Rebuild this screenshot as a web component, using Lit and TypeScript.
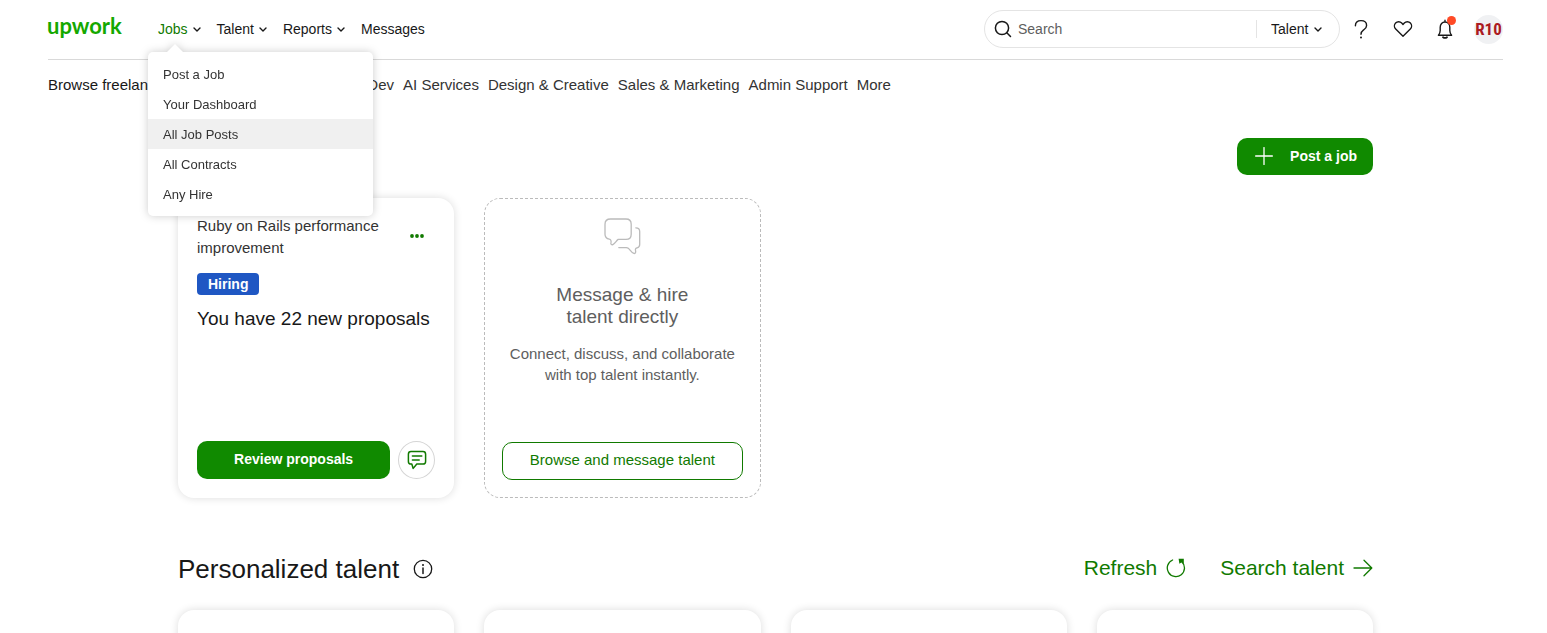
import { LitElement, html, css, svg } from "lit";
import { customElement } from "lit/decorators.js";
import { classMap } from "lit/directives/class-map.js";

const chevron = html`<svg class="chevron" viewBox="0 0 8 5" aria-hidden="true">
  <path d="M1 1 4 4 7 1" fill="none" stroke="currentColor" stroke-width="1.4" stroke-linecap="round" stroke-linejoin="round" />
</svg>`;

const icon = (w: number, h: number, body: unknown) => html`<svg
  width=${w} height=${h} viewBox="0 0 ${w} ${h}" fill="none" stroke="currentColor"
  stroke-width="1.5" stroke-linecap="round" stroke-linejoin="round" aria-hidden="true">${body}</svg>`;

const searchIcon = icon(18, 18, svg`<circle cx="8" cy="8" r="6.6"/><path d="m12.8 12.8 3.7 3.7"/>`);
const helpIcon = icon(14, 20, svg`<path stroke-width="1.4" d="M1.4 6.8C1.4 3.6 3.6 1.6 7 1.6s5.6 2 5.6 4.8c0 2.4-1.4 3.3-3 4.5C7.900 12.200 7 13.200 7 15.200"/><circle cx="7" cy="18.400" r="1" fill="currentColor" stroke="none"/>`);
const heartIcon = icon(20, 18, svg`<path stroke-width="1.4" d="M10 16.2 2.7 9.1A4.4 4.4 0 0 1 2.6 3 4.2 4.2 0 0 1 8.7 3L10 4.4 11.3 3a4.2 4.2 0 0 1 6.1 0 4.4 4.4 0 0 1-.1 6.1Z"/>`);
const bellIcon = icon(16, 20, svg`<path stroke-width="1.4" d="M1.4 16.2c1.4-1.4 1.8-2.6 1.8-4.6V8.2c0-3 2-5.2 4.8-5.2s4.8 2.2 4.8 5.2v3.4c0 2 .4 3.2 1.8 4.600ZM8 1.200V3"/><path stroke-width="1.800" d="M6 18.200c1.200.9 2.800.9 4 0"/>`);
const plusIcon = icon(18, 18, svg`<path stroke-width="1.3" d="M9 .6v16.8M.6 9h16.8"/>`);
const dotsIcon = html`<svg width="14" height="4" viewBox="0 0 14 4" fill="currentColor" aria-hidden="true">
  <circle cx="2" cy="2" r="1.9"/><circle cx="7" cy="2" r="1.9"/><circle cx="12" cy="2" r="1.9"/></svg>`;
const noteIcon = icon(20, 20, svg`<path d="M4 1.6h12c1.6 0 2.6 1 2.6 2.6v7.2c0 1.6-1 2.6-2.6 2.6H9.8l-3.6 4.4-1.4-4.4H4c-1.6 0-2.6-1-2.6-2.6V4.2c0-1.6 1-2.6 2.6-2.6ZM5.4 6h9.4M5.4 9.9h6.8"/>`);
const chatIcon = icon(37, 37, svg`<path stroke-width="1.3" d="M6.5 1h15.5c3.4 0 5.2 1.8 5.2 5.2v10c0 3.4-1.8 5.2-5.2 5.2h-7.8c-1.8 1.2-3 4-5.4 5.2-1.8.6-2.2-.8-1.8-2.2.4-1.8-.4-3-1.6-3.2C2.6 20.6 1 18.8 1 16.2v-10C1 2.8 3 1 6.500 1Z"/><path stroke-width="1.3" d="M31.8 9.8c2.6 0 3.9 1.2 3.9 3.6v13.2c0 2-1 2.9-2.6 3.2-1.2.2-2 1-1.6 2.6.5 2 0 3.4-1.6 3-2.6-.8-3.6-3.6-5.6-5.2-.6-.4-1.2-.6-2-.6h-7.5"/>`);
const infoIcon = icon(20, 20, svg`<circle cx="10" cy="10" r="8.7" stroke-width="1.3"/><path stroke-width="1.5" d="M10 9v5.4"/><circle cx="10" cy="6" r="1" fill="currentColor" stroke="none"/>`);
const refreshIcon = icon(20, 20, svg`<path stroke-width="1.3" d="M6.6 2A8.6 8.6 0 1 0 15.8 3.7"/><path d="M12.6.8h5.200V6l-2-1.700-2.400 1.500Z" fill="currentColor" stroke="none"/>`);
const arrowIcon = icon(20, 18, svg`<path stroke-width="1.3" d="M1 9h17.6M11 1.2 18.8 9 11 16.8"/>`);

@customElement("app-header")
class AppHeader extends LitElement {
  static styles = css`
    :host { display: block; font: 14px/20px "Liberation Sans", Arial, sans-serif; color: #181818; }
    button, input, select { font: inherit; color: inherit; background: none; border: 0; padding: 0; margin: 0; }
    a { color: inherit; text-decoration: none; }
    .bar { display: flex; align-items: center; height: 58px; padding-bottom: 1px; border-bottom: 1px solid #d9d9d9; }
    .home { display: flex; }
    .logo { width: 76px; height: 32px; flex: none; overflow: visible; }
    .logo text { font: 700 22px Lato, sans-serif; fill: #14a800; }
    .nav { display: flex; gap: 16px; margin-left: 34px; flex: 1; }
    .item { position: relative; display: flex; }
    .trigger { display: flex; align-items: center; gap: 5px; cursor: pointer; white-space: nowrap; }
    .open { color: #117a00; }
    .open .chevron { color: #181818; }
    .chevron { width: 8px; height: 5px; flex: none; }
    .menu { position: absolute; z-index: 2; top: 33px; left: -10px; width: 225px; box-sizing: border-box;
      padding: 7px 0; background: #fff; border-radius: 5px; filter: drop-shadow(0 0 4px rgba(0, 0, 0, 0.2)); }
    .menu::before { content: ""; position: absolute; top: -8px; left: 19px; width: 16px; height: 8px;
      background: #fff; clip-path: polygon(50% 0, 100% 100%, 0 100%); }
    .entry { display: block; padding: 2px 15px 0; font-size: 13px; line-height: 28px; color: #333; background: #fff; }
    .active { background: #f0f0f0; }
    .search { display: flex; align-items: center; box-sizing: border-box; width: 356px; height: 38px;
      padding: 0 17px 0 9px; border: 1px solid #e4e4e4; border-radius: 19px; }
    .query { flex: 1; min-width: 0; margin-left: 6px; outline: none; }
    .query::placeholder { color: #5e5e5e; opacity: 1; }
    .scope { display: flex; align-items: center; border-left: 1px solid #e4e4e4; padding-left: 14px; }
    .select { appearance: none; width: 43px; height: 18px; line-height: 18px; outline: none; }
    .tools { display: flex; align-items: center; }
    .tool { position: relative; display: flex; justify-content: center; width: 42px; cursor: pointer; }
    .dot { position: absolute; top: -3px; right: 10px; width: 9px; height: 9px; border-radius: 50%; background: #ff4a26; }
    .avatar { display: flex; align-items: center; justify-content: center; width: 29px; height: 29px; margin-left: 8px;
      border-radius: 50%; background: #f0f1f3; color: #ab1b22; cursor: pointer;
      font: bold 17px "Roboto Condensed", Roboto, sans-serif; }
    .skills { display: flex; gap: 9px; padding-top: 15px; font-size: 15px; color: #333; white-space: nowrap; }
    .lead { width: 247px; color: #181818; flex: none; box-sizing: border-box; }
  `;

  render() {
    const entries = ["Post a Job", "Your Dashboard", "All Job Posts", "All Contracts", "Any Hire"];
    const skills = ["Software Dev", "AI Services", "Design & Creative", "Sales & Marketing", "Admin Support", "More"];
    return html`
      <header class="bar">
        <a class="home" href="#" aria-label="Upwork home"><svg class="logo" viewBox="0 0 76 32"><text x="-1" y="21">upwork</text></svg></a>
        <nav class="nav" aria-label="Main">
          <div class="item">
            <button class="trigger open" aria-expanded="true">Jobs ${chevron}</button>
            <div class="menu">
              ${entries.map((e) => html`<a href="#" class=${classMap({ entry: true, active: e === "All Job Posts" })}>${e}</a>`)}
            </div>
          </div>
          <div class="item"><button class="trigger" aria-expanded="false">Talent ${chevron}</button></div>
          <div class="item"><button class="trigger" aria-expanded="false">Reports ${chevron}</button></div>
          <div class="item"><a class="trigger" href="#">Messages</a></div>
        </nav>
        <form class="search" role="search">
          ${searchIcon}
          <input class="query" type="text" placeholder="Search" aria-label="Search" />
          <label class="scope"><select class="select" aria-label="Search in"><option>Talent</option></select>${chevron}</label>
        </form>
        <div class="tools">
          <button class="tool" aria-label="Help">${helpIcon}</button>
          <button class="tool" aria-label="Saved">${heartIcon}</button>
          <button class="tool" aria-label="Notifications">${bellIcon}<span class="dot"></span></button>
          <button class="avatar" aria-label="Account">R10</button>
        </div>
      </header>
      <nav class="skills" aria-label="Skills">
        <a class="lead" href="#">Browse freelancers</a>
        ${skills.map((s) => html`<a href="#">${s}</a>`)}
      </nav>`;
  }
}

@customElement("app-root")
class AppRoot extends LitElement {
  static styles = css`
    :host { display: block; min-height: 100vh; padding: 0 44px 0 48px; box-sizing: border-box; background: #fff;
      font: 15px/22px "Liberation Sans", Arial, sans-serif; color: #181818; }
    button { font: inherit; border: 0; padding: 0; margin: 0; background: none; cursor: pointer; }
    a { text-decoration: none; }
    h2, h3, p { margin: 0; font-weight: 400; }
    .main { max-width: 1195px; margin: 0 auto; padding-top: 43px; }
    .actions { display: flex; justify-content: flex-end; margin-bottom: 23px; }
    .primary { height: 37px; padding-bottom: 2px; border-radius: 10px; background: #108a00; color: #fff; font-size: 14px; font-weight: bold; }
    .post { display: flex; align-items: center; gap: 17px; padding: 0 16px 2px 18px; }
    .cards { display: grid; grid-template-columns: repeat(4, 1fr); gap: 30px; }
    .card { display: flex; flex-direction: column; box-sizing: border-box; min-height: 300px; padding: 17px 19px 19px;
      border-radius: 16px; background: #fff; box-shadow: 0 0 8px rgba(0, 0, 0, 0.14); }
    .top { display: flex; justify-content: space-between; align-items: center; }
    .title { width: 190px; color: #333; }
    .more { display: flex; padding: 8px 11px; margin-top: -2px; color: #117a00; }
    .badge { align-self: flex-start; margin-top: 14px; padding: 0 11px; border-radius: 4px; background: #1f57c3;
      color: #fff; font-size: 14px; font-weight: bold; }
    .count { margin-top: 11px; font-size: 19px; line-height: 26px; white-space: nowrap; }
    .foot { display: flex; align-items: center; gap: 8px; margin-top: auto; }
    .grow { flex: 1; height: 38px; }
    .round { display: flex; align-items: center; justify-content: center; box-sizing: border-box; width: 37px; height: 38px;
      border: 1px solid #d5d5d5; border-radius: 50%; color: #117a00; }
    .invite { align-items: stretch; padding: 19px 17px 17px; border: 1px dashed #bbb; box-shadow: none; text-align: center; color: #5e5e5e; }
    .art { display: flex; justify-content: center; color: #bbb; }
    .ask { margin-top: 29px; font-size: 19px; }
    .line { display: block; }
    .note { margin-top: 15px; line-height: 21px; white-space: nowrap; }
    .outline { height: 38px; margin-top: auto; padding-bottom: 2px; border: 1px solid #117a00; border-radius: 10px; color: #117a00; }
    .heading { display: flex; align-items: center; justify-content: space-between; margin: 54px 0 24px; }
    .name { display: flex; align-items: center; gap: 14px; font-size: 26px; line-height: 34px; }
    .links { display: flex; gap: 34px; padding-bottom: 2px; font-size: 21px; line-height: 30px; }
    .link { display: flex; align-items: center; gap: 9px; color: #117a00; }
  `;

  render() {
    return html`
      <app-header></app-header>
      <main class="main">
        <div class="actions"><button class="primary post">${plusIcon}Post a job</button></div>
        <section class="cards">
          <article class="card">
            <div class="top">
              <p class="title">Ruby on Rails performance improvement</p>
              <button class="more" aria-label="More options">${dotsIcon}</button>
            </div>
            <span class="badge">Hiring</span>
            <h3 class="count">You have 22 new proposals</h3>
            <div class="foot">
              <button class="primary grow">Review proposals</button>
              <button class="round" aria-label="Messages">${noteIcon}</button>
            </div>
          </article>
          <article class="card invite">
            <div class="art">${chatIcon}</div>
            <h3 class="ask"><span class="line">Message &amp; hire</span><span class="line">talent directly</span></h3>
            <p class="note"><span class="line">Connect, discuss, and collaborate</span><span class="line">with top talent instantly.</span></p>
            <button class="outline">Browse and message talent</button>
          </article>
        </section>
        <div class="heading">
          <h2 class="name">Personalized talent ${infoIcon}</h2>
          <div class="links">
            <a class="link" href="#">Refresh ${refreshIcon}</a>
            <a class="link" href="#">Search talent ${arrowIcon}</a>
          </div>
        </div>
        <section class="cards" aria-label="Personalized talent">
          ${[0, 1, 2, 3].map(() => html`<article class="card"></article>`)}
        </section>
      </main>`;
  }
}
